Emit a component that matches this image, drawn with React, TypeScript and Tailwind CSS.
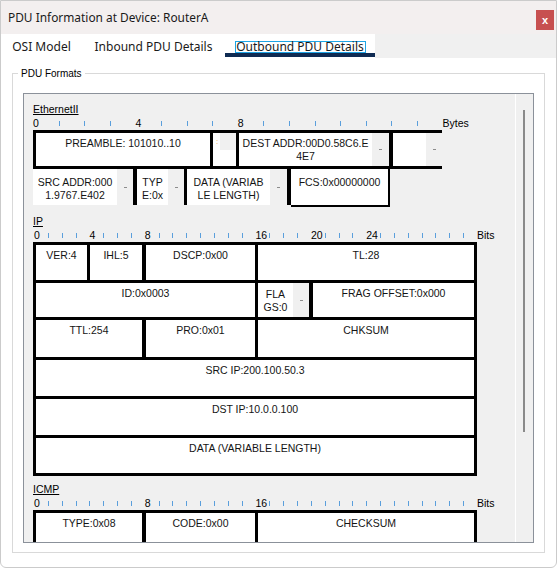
import * as React from 'react';

type CellProps = {
  width: string;
  lines: string[];
  strip?: string;
  pad?: string;
};

type RulerProps = {
  slots: number;
  slot: string;
  offset: string;
  marks: Record<number, string>;
  unit: string;
};

// one text line per entry, centred near the top of a field
function Lines({ lines, pad = 'pt-[4px]' }: { lines: string[]; pad?: string }) {
  return (
    <div className={`${pad} whitespace-nowrap text-center text-[10.5px] leading-[13px] text-[#141414]`}>
      {lines.map((line) => (
        <div key={line}>{line}</div>
      ))}
    </div>
  );
}

// the little grey scroll strip at the right of a clipped field
function Strip({ width }: { width: string }) {
  return (
    <div className={`${width} flex shrink-0 items-center justify-center bg-[#f0f0f0]`}>
      <div className="h-px w-[3px] bg-[#8c8c8c]" />
    </div>
  );
}

function Cell({ width, lines, strip, pad }: CellProps) {
  return (
    <div className={`${width} flex shrink-0`}>
      <div className="min-w-0 flex-1 overflow-hidden bg-white">
        <Lines lines={lines} pad={pad} />
      </div>
      {strip && <Strip width={strip} />}
    </div>
  );
}

function Bar({ width }: { width: string }) {
  return <div className={`${width} shrink-0 bg-black`} />;
}

function Ruler({ slots, slot, offset, marks, unit }: RulerProps) {
  return (
    <div className={`flex h-[14px] items-center ${offset} text-[10.5px] leading-none text-black`}>
      {Array.from({ length: slots }, (_, i) => (
        <div key={i} className={`${slot} flex shrink-0 items-center`}>
          {marks[i] !== undefined ? <span>{marks[i]}</span> : <div className="h-[5px] w-px bg-[#5b9fdc]" />}
        </div>
      ))}
      <span>{unit}</span>
    </div>
  );
}

function Heading({ gap, children }: { gap: string; children: React.ReactNode }) {
  return <div className={`${gap} h-[13px] text-[10.5px] leading-[13px] text-black underline`}>{children}</div>;
}

function Ethernet() {
  return (
    <>
      <Heading gap="mt-[9px]">EthernetII</Heading>
      <Ruler slots={16} slot="w-[25.6px]" offset="pl-0" marks={{ 0: '0', 4: '4', 8: '8' }} unit="Bytes" />
      <div className="flex h-[39px] w-[409px] border-y-[3px] border-black">
        <Bar width="w-[3px]" />
        <Cell width="w-[174px]" lines={['PREAMBLE: 101010..10']} />
        <Bar width="w-[3px]" />
        <div className="flex w-[23px] shrink-0">
          <div className="w-[7px] bg-white pl-[3px] pt-[4px] text-[8px] leading-[10px] text-[#f0a040]">:</div>
          <div className="flex w-[16px] flex-col">
            <div className="h-[17px] bg-[#f0f0f0]" />
            <div className="flex-1 bg-white" />
          </div>
        </div>
        <Bar width="w-[3px]" />
        <Cell width="w-[150px]" lines={['DEST ADDR:00D0.58C6.E', '4E7']} strip="w-[17px]" />
        <Bar width="w-[4px]" />
        <Cell width="w-[49px]" lines={['']} strip="w-[16px]" />
      </div>
      <div className="flex h-[38px] items-start">
        <div className="flex h-[36px]">
          <Cell width="w-[100px]" lines={['SRC ADDR:000', '1.9767.E402']} strip="w-[16px]" pad="pt-[7px]" />
          <Bar width="w-[4px]" />
          <Cell width="w-[47px]" lines={['TYP', 'E:0x']} strip="w-[16px]" pad="pt-[7px]" />
          <Bar width="w-[3px]" />
          <Cell width="w-[100px]" lines={['DATA (VARIAB', 'LE LENGTH)']} strip="w-[17px]" pad="pt-[7px]" />
          <Bar width="w-[4px]" />
        </div>
        <div className="h-[38px] w-[99px] border-b-2 border-r-2 border-black bg-white">
          <Lines lines={['FCS:0x00000000']} pad="pt-[7px]" />
        </div>
      </div>
    </>
  );
}

function Ip() {
  return (
    <>
      <Heading gap="mt-[8px]">IP</Heading>
      <Ruler
        slots={32}
        slot="w-[13.85px]"
        offset="pl-px"
        marks={{ 0: '0', 4: '4', 8: '8', 16: '16', 20: '20', 24: '24' }}
        unit="Bits"
      />
      <div className="w-[444px] border-x-[3px] border-t-[3px] border-black">
        <div className="flex h-[38px] border-b-[3px] border-black">
          <Cell width="w-[51px]" lines={['VER:4']} />
          <Bar width="w-[3px]" />
          <Cell width="w-[52px]" lines={['IHL:5']} />
          <Bar width="w-[4px]" />
          <Cell width="w-[109px]" lines={['DSCP:0x00']} />
          <Bar width="w-[3px]" />
          <Cell width="w-[216px]" lines={['TL:28']} />
        </div>
        <div className="flex h-[37px] border-b-[3px] border-black">
          <Cell width="w-[219px]" lines={['ID:0x0003']} />
          <Bar width="w-[3px]" />
          <Cell width="w-[51px]" lines={['FLA', 'GS:0']} strip="w-[16px]" pad="pt-[5px]" />
          <Bar width="w-[4px]" />
          <Cell width="w-[161px]" lines={['FRAG OFFSET:0x000']} />
        </div>
        <div className="flex h-[40px] border-b-[3px] border-black">
          <Cell width="w-[106px]" lines={['TTL:254']} />
          <Bar width="w-[4px]" />
          <Cell width="w-[109px]" lines={['PRO:0x01']} />
          <Bar width="w-[3px]" />
          <Cell width="w-[216px]" lines={['CHKSUM']} />
        </div>
        <div className="flex h-[39px] border-b-[3px] border-black">
          <Cell width="w-[438px]" lines={['SRC IP:200.100.50.3']} />
        </div>
        <div className="flex h-[39px] border-b-[3px] border-black">
          <Cell width="w-[438px]" lines={['DST IP:10.0.0.100']} />
        </div>
        <div className="flex h-[38px] border-b-[3px] border-black">
          <Cell width="w-[438px]" lines={['DATA (VARIABLE LENGTH)']} />
        </div>
      </div>
    </>
  );
}

function Icmp() {
  return (
    <>
      <Heading gap="mt-[7px]">ICMP</Heading>
      <Ruler slots={32} slot="w-[13.85px]" offset="pl-px" marks={{ 0: '0', 8: '8', 16: '16' }} unit="Bits" />
      <div className="w-[444px] border-x-[3px] border-t-[3px] border-black">
        <div className="flex h-[38px] border-b-[3px] border-black">
          <Cell width="w-[106px]" lines={['TYPE:0x08']} />
          <Bar width="w-[4px]" />
          <Cell width="w-[109px]" lines={['CODE:0x00']} />
          <Bar width="w-[3px]" />
          <Cell width="w-[216px]" lines={['CHECKSUM']} />
        </div>
      </div>
    </>
  );
}

export default function App() {
  return (
    <div className="flex h-[568px] w-[557px] flex-col overflow-hidden rounded-b-[6px] border border-[#cbcbcb] bg-white font-['Noto_Sans',sans-serif] text-[#1a1a1a]">
      <div className="flex h-[33px] shrink-0 bg-[#f3efef]">
        <div className="flex-1 pl-[7px] text-[11.9px] leading-[33px]">PDU Information at Device: RouterA</div>
        <div className="mr-[2px] mt-[9px] flex h-[20px] w-[18px] items-center justify-center bg-[#c75050] font-['Liberation_Sans',Arial,sans-serif] text-[11px] font-bold leading-none text-white">
          x
        </div>
      </div>

      <div className="flex h-[24px] shrink-0 text-[12px]">
        <div className="flex w-[81px] items-center justify-center bg-white pt-px">OSI Model</div>
        <div className="flex w-[143px] items-center justify-center bg-white pt-px">Inbound PDU Details</div>
        <div className="flex w-[150px] flex-col items-center justify-end bg-white pb-px">
          <div className="flex h-[12px] w-[131px] items-center justify-center border border-[#1ea5e6] leading-[10px]">
            Outbound PDU Details
          </div>
          <div className="h-[4px] w-full bg-[#0f2b52]" />
        </div>
        <div className="flex-1 bg-[#f0f0f0]" />
      </div>

      <div className="flex-1 px-[11px] pt-[9px] font-['Liberation_Sans',Arial,sans-serif]">
        <fieldset className="border border-[#d9d9d9]">
          <legend className="ml-[5px] px-[3px] text-[10px] leading-[13px] text-black">PDU Formats</legend>
          <div className="px-[10px] pb-[9px] pt-[13px]">
            <div className="flex h-[450px] w-[511px] overflow-hidden border border-[#8b919a] bg-[#f0f0f0]">
              <div className="min-w-0 flex-1 overflow-hidden pl-[9px]">
                <Ethernet />
                <Ip />
                <Icmp />
              </div>
              <div className="w-[18px] shrink-0 border-l border-white">
                <div className="ml-[7px] mt-[16px] h-[322px] w-[2px] bg-[#8a8a8a]" />
              </div>
            </div>
          </div>
        </fieldset>
      </div>
    </div>
  );
}
